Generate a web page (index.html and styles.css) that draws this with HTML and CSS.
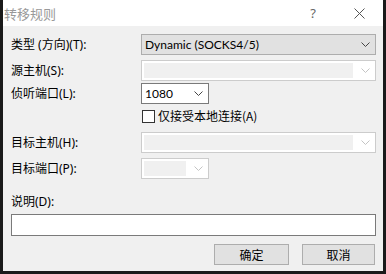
FILE: index.html
```html
<!DOCTYPE html>
<html lang="zh-CN">
<head>
    <meta charset="UTF-8">
    <title>转移规则</title>
    <link rel="stylesheet" href="styles.css">
</head>
<body>

<div class="window">
    <div class="titlebar">
        <span class="title">转移规则</span>
        <span class="help">?</span>
        <svg class="close" width="11" height="11" viewBox="0 0 11 11">
            <path d="M0.5 0.5 L10.5 10.5 M10.5 0.5 L0.5 10.5" stroke="#555" stroke-width="1" fill="none"/>
        </svg>
    </div>

    <div class="content">
        <div class="row row-type">
            <label class="label">类型 (方向)(T):</label>
            <div class="combo combo-wide combo-button">
                <span class="combo-text">Dynamic (SOCKS4/5)</span>
                <svg class="chevron" width="9" height="5" viewBox="0 0 9 5"><path d="M0.5 0.5 L4.5 4.5 L8.5 0.5" stroke="#444" fill="none"/></svg>
            </div>
        </div>

        <div class="row row-src">
            <label class="label">源主机(S):</label>
            <div class="combo combo-wide disabled">
                <span class="combo-field"></span>
                <svg class="chevron" width="9" height="5" viewBox="0 0 9 5"><path d="M0.5 0.5 L4.5 4.5 L8.5 0.5" stroke="#c4c4c4" fill="none"/></svg>
            </div>
        </div>

        <div class="row row-listen">
            <label class="label">侦听端口(L):</label>
            <div class="combo combo-small">
                <span class="combo-text">1080</span>
                <svg class="chevron" width="9" height="5" viewBox="0 0 9 5"><path d="M0.5 0.5 L4.5 4.5 L8.5 0.5" stroke="#444" fill="none"/></svg>
            </div>
        </div>

        <div class="row row-check">
            <span class="check-box"></span>
            <span class="check-label">仅接受本地连接(A)</span>
        </div>

        <div class="row row-dsthost">
            <label class="label">目标主机(H):</label>
            <div class="combo combo-wide disabled">
                <span class="combo-field"></span>
                <svg class="chevron" width="9" height="5" viewBox="0 0 9 5"><path d="M0.5 0.5 L4.5 4.5 L8.5 0.5" stroke="#c4c4c4" fill="none"/></svg>
            </div>
        </div>

        <div class="row row-dstport">
            <label class="label">目标端口(P):</label>
            <div class="combo combo-small disabled">
                <span class="combo-field"></span>
                <svg class="chevron" width="9" height="5" viewBox="0 0 9 5"><path d="M0.5 0.5 L4.5 4.5 L8.5 0.5" stroke="#c4c4c4" fill="none"/></svg>
            </div>
        </div>

        <div class="desc-label">说明(D):</div>
        <div class="textbox"></div>

        <div class="buttons">
            <button class="btn">确定</button>
            <button class="btn">取消</button>
        </div>
    </div>
</div>

</body>
</html>
```

FILE: styles.css
```css
html, body {
    margin: 0;
    padding: 0;
}
body {
    width: 386px;
    height: 274px;
    overflow: hidden;
    font-family: "Noto Sans", "Noto Sans CJK SC", sans-serif;
    font-size: 12px;
    color: #000;
}
.window {
    box-sizing: border-box;
    width: 386px;
    height: 274px;
    border: 3px solid #1a1a1a;
    border-top: none;
    display: flex;
    flex-direction: column;
    background-color: #f0f0f0;
}
.titlebar {
    height: 26px;
    background-color: #fff;
    display: flex;
    align-items: center;
    padding-left: 1px;
    flex-shrink: 0;
}
.title {
    font-family: "Noto Sans CJK SC", sans-serif;
    font-size: 13px;
    color: #999;
    flex: 1;
}
.help {
    font-family: "Noto Sans", sans-serif;
    font-size: 13px;
    color: #666;
    margin-right: 38px;
}
.close {
    margin-right: 18px;
}
.content {
    flex: 1;
    display: flex;
    flex-direction: column;
    padding: 8px 7px 0 8px;
}
.row {
    display: flex;
    align-items: center;
}
.label {
    width: 130px;
    flex-shrink: 0;
    line-height: 16px;
}
.combo {
    box-sizing: border-box;
    height: 21px;
    border: 1px solid #7a7a7a;
    background-color: #fff;
    display: flex;
    align-items: center;
    padding-left: 3px;
}
.combo-wide {
    width: 235px;
}
.combo-small {
    width: 68px;
}
.combo-button {
    background-color: #e1e1e1;
    border-color: #adadad;
}
.combo-text {
    flex: 1;
    font-family: Lato, "Noto Sans", sans-serif;
    line-height: 16px;
    font-size: 12px;
}
.chevron {
    margin-right: 5px;
    margin-left: 4px;
}
.disabled {
    border-color: #cccccc;
    padding: 2px 0 2px 2px;
}
.combo-field {
    flex: 1;
    align-self: stretch;
    background-color: #f0f0f0;
    margin-right: 4px;
}
.row-src {
    margin-top: 5px;
}
.row-listen {
    margin-top: 2px;
}
.row-check {
    margin-top: 5px;
    padding-left: 131px;
    height: 14px;
}
.check-box {
    box-sizing: border-box;
    width: 13px;
    height: 13px;
    border: 1px solid #333;
    background-color: #fff;
    margin-right: 3px;
}
.check-label {
    font-family: "Noto Sans CJK SC", sans-serif;
    line-height: 16px;
}
.row-dsthost {
    margin-top: 9px;
}
.row-dstport {
    margin-top: 5px;
}
.desc-label {
    margin-top: 15px;
    line-height: 16px;
}
.textbox {
    box-sizing: border-box;
    height: 22px;
    width: 365px;
    margin-top: 4px;
    border: 1px solid #7a7a7a;
    background-color: #fff;
}
.buttons {
    display: flex;
    justify-content: flex-end;
    gap: 13px;
    margin-top: 8px;
    padding-right: 1px;
}
.btn {
    box-sizing: border-box;
    width: 75px;
    height: 21px;
    padding: 0;
    border: 1px solid #adadad;
    background-color: #e1e1e1;
    font-family: "Noto Sans CJK SC", sans-serif;
    font-size: 12px;
    color: #000;
}
.btn:last-child {
    width: 73px;
}
```
